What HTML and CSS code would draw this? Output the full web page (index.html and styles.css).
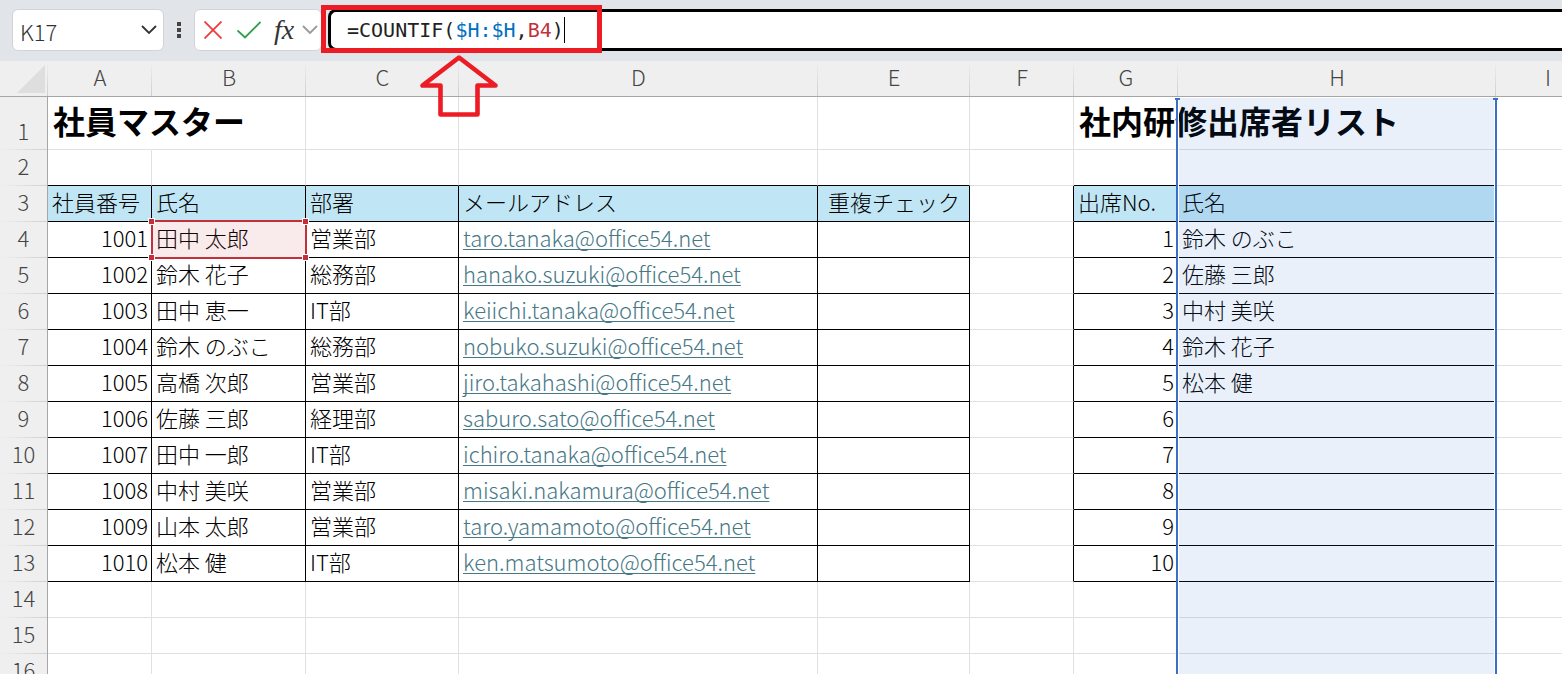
FILE: index.html
```html
<!DOCTYPE html>
<html lang="ja">
<head>
<meta charset="utf-8">
<title>社員マスター</title>
<link rel="stylesheet" href="styles.css">
</head>
<body>
<div class="toolbar">
  <div class="name-box">
    <input class="name-input" type="text" value="K17" aria-label="名前ボックス">
    <button class="tool" type="button" aria-label="名前の一覧">
      <svg width="16" height="10" viewBox="0 0 16 10"><path d="M1 1l7 7 7-7" fill="none" stroke="#333" stroke-width="1.8"/></svg>
    </button>
  </div>
  <svg class="grip" width="4" height="16" viewBox="0 0 4 16"><path d="M0 0h4v4H0zM0 6h4v4H0zM0 12h4v4H0z" fill="#444"/></svg>
  <div class="actions">
    <button class="tool" type="button" aria-label="キャンセル">
      <svg width="18" height="18" viewBox="0 0 18 18"><path d="M.5.5l17 17M17.500.5l-17 17" fill="none" stroke="#ee3a3a" stroke-width="1.8"/></svg>
    </button>
    <button class="tool" type="button" aria-label="入力">
      <svg width="24" height="18" viewBox="0 0 24 18"><path d="M.5 9.500l7.500 7L23.500 1" fill="none" stroke="#2f9e49" stroke-width="1.8"/></svg>
    </button>
    <button class="tool fx" type="button" aria-label="関数の挿入">fx</button>
    <button class="tool" type="button" aria-label="関数の一覧">
      <svg width="16" height="10" viewBox="0 0 16 10"><path d="M1 1l7 7 7-7" fill="none" stroke="#999" stroke-width="1.8"/></svg>
    </button>
  </div>
  <div class="formula">
    <div class="formula-text" role="textbox" aria-label="数式バー" contenteditable="true" spellcheck="false">=COUNTIF(<span class="ref-blue">$H:$H</span>,<span class="ref-red">B4</span>)<span class="caret"></span></div>
    <div class="callout"></div>
    <svg class="arrow" width="80" height="66" viewBox="0 0 80 66"><path d="M40 4.500L3.500 32.500H21.500V61.500H58.500V32.500H76.500Z" fill="none" stroke="#ed1c24" stroke-width="4.600" stroke-linejoin="round"/></svg>
  </div>
</div>

<main class="sheet">
  <table class="grid">
    <colgroup>
      <col class="w-head"><col class="w-s"><col class="w-b"><col class="w-c"><col class="w-d"><col class="w-e"><col class="w-s"><col class="w-s"><col class="w-h"><col class="w-s">
    </colgroup>
    <thead>
      <tr><th class="corner"><svg width="28" height="28" viewBox="0 0 28 28"><path d="M28 0v28H0z" fill="#dedede"/></svg></th><th>A</th><th>B</th><th>C</th><th>D</th><th>E</th><th>F</th><th>G</th><th>H<div class="column-range"></div></th><th>I</th></tr>
    </thead>
    <tbody>
      <tr class="title-row"><th>1</th><td class="title open">社員マスター</td><td></td><td></td><td></td><td></td><td></td><td class="title open">社内研修出席者リスト</td><td></td><td></td></tr>
      <tr class="above"><th>2</th><td></td><td></td><td></td><td></td><td></td><td></td><td></td><td></td><td></td></tr>
      <tr class="data label"><th>3</th><td>社員番号</td><td>氏名</td><td>部署</td><td>メールアドレス</td><td class="center">重複チェック</td><td></td><td>出席No.</td><td>氏名</td><td></td></tr>
      <tr class="data"><th>4</th><td>1001</td><td class="picked">田中 太郎<div class="cell-range"><i></i><i></i><i></i><i></i></div></td><td>営業部</td><td><a href="mailto:taro.tanaka@office54.net">taro.tanaka@office54.net</a></td><td></td><td></td><td>1</td><td>鈴木 のぶこ</td><td></td></tr>
      <tr class="data"><th>5</th><td>1002</td><td>鈴木 花子</td><td>総務部</td><td><a href="mailto:hanako.suzuki@office54.net">hanako.suzuki@office54.net</a></td><td></td><td></td><td>2</td><td>佐藤 三郎</td><td></td></tr>
      <tr class="data"><th>6</th><td>1003</td><td>田中 恵一</td><td>IT部</td><td><a href="mailto:keiichi.tanaka@office54.net">keiichi.tanaka@office54.net</a></td><td></td><td></td><td>3</td><td>中村 美咲</td><td></td></tr>
      <tr class="data"><th>7</th><td>1004</td><td>鈴木 のぶこ</td><td>総務部</td><td><a href="mailto:nobuko.suzuki@office54.net">nobuko.suzuki@office54.net</a></td><td></td><td></td><td>4</td><td>鈴木 花子</td><td></td></tr>
      <tr class="data"><th>8</th><td>1005</td><td>高橋 次郎</td><td>営業部</td><td><a href="mailto:jiro.takahashi@office54.net">jiro.takahashi@office54.net</a></td><td></td><td></td><td>5</td><td>松本 健</td><td></td></tr>
      <tr class="data"><th>9</th><td>1006</td><td>佐藤 三郎</td><td>経理部</td><td><a href="mailto:saburo.sato@office54.net">saburo.sato@office54.net</a></td><td></td><td></td><td>6</td><td></td><td></td></tr>
      <tr class="data"><th>10</th><td>1007</td><td>田中 一郎</td><td>IT部</td><td><a href="mailto:ichiro.tanaka@office54.net">ichiro.tanaka@office54.net</a></td><td></td><td></td><td>7</td><td></td><td></td></tr>
      <tr class="data"><th>11</th><td>1008</td><td>中村 美咲</td><td>営業部</td><td><a href="mailto:misaki.nakamura@office54.net">misaki.nakamura@office54.net</a></td><td></td><td></td><td>8</td><td></td><td></td></tr>
      <tr class="data"><th>12</th><td>1009</td><td>山本 太郎</td><td>営業部</td><td><a href="mailto:taro.yamamoto@office54.net">taro.yamamoto@office54.net</a></td><td></td><td></td><td>9</td><td></td><td></td></tr>
      <tr class="data"><th>13</th><td>1010</td><td>松本 健</td><td>IT部</td><td><a href="mailto:ken.matsumoto@office54.net">ken.matsumoto@office54.net</a></td><td></td><td></td><td>10</td><td></td><td></td></tr>
      <tr><th>14</th><td></td><td></td><td></td><td></td><td></td><td></td><td></td><td></td><td></td></tr>
      <tr><th>15</th><td></td><td></td><td></td><td></td><td></td><td></td><td></td><td></td><td></td></tr>
      <tr><th>16</th><td></td><td></td><td></td><td></td><td></td><td></td><td></td><td></td><td></td></tr>
    </tbody>
  </table>
</main>
</body>
</html>
```
FILE: styles.css
```css
* { box-sizing: border-box; }

body {
  margin: 0;
  height: 100vh;
  display: flex;
  flex-direction: column;
  overflow: hidden;
  background: #fff;
  color: #000;
  font-family: "Noto Sans CJK JP", "Noto Sans", sans-serif;
  font-size: 22px;
  font-weight: 300;
  line-height: 32px;
}

/* Toolbar */
.toolbar {
  position: relative;
  z-index: 2;
  display: flex;
  flex: none;
  align-items: center;
  padding: 9px 0 10px 12px;
  background: #e1e5ea;
}

.name-box,
.actions {
  display: flex;
  align-items: center;
  height: 42px;
  background: #fff;
  border: 1px solid #d0d3d7;
  border-radius: 6px;
}

.name-box { width: 152px; padding: 0 6px 0 7px; }

.name-input {
  flex: 1;
  min-width: 0;
  padding: 2px 0 0;
  border: 0;
  outline: 0;
  background: none;
  color: #333;
  font: inherit;
}

.tool {
  display: flex;
  padding: 0;
  border: 0;
  background: none;
}

.grip { margin: 0 13px; }

.actions { width: 128px; padding: 0 2px 0 9px; gap: 15px; }

.fx {
  margin: 0 -7px 0 -2px;
  color: #333;
  font: italic 28px/32px "Liberation Serif", serif;
}

.formula {
  position: relative;
  flex: 1;
  height: 42px;
  margin-left: 6px;
  border: 3px solid #000;
  border-right: 0;
  border-radius: 8px 0 0 8px;
  background: #fff;
}

.formula-text {
  display: flex;
  align-items: center;
  height: 36px;
  padding-left: 16px;
  outline: 0;
  color: #222;
  font: 20px/24px "DejaVu Sans Mono", monospace;
}

.ref-blue { color: #0070c0; }
.ref-red { color: #c0313a; }
.caret { width: 1px; height: 26px; background: #000; }

.callout {
  position: absolute;
  top: -7px;
  left: -10px;
  width: 281px;
  height: 48px;
  border: 5px solid #ed1c24;
}

.arrow {
  position: absolute;
  top: 41px;
  left: 88px;
}

/* Sheet */
.sheet { flex: 1; min-height: 0; overflow: hidden; }

.grid {
  width: 1599px;
  table-layout: fixed;
  border-collapse: separate;
  border-spacing: 0;
}

.w-head { width: 48px; }
.w-s { width: 104px; }
.w-b { width: 154px; }
.w-c { width: 153px; }
.w-d { width: 359px; }
.w-e { width: 152px; }
.w-h { width: 318px; }

tr { height: 36px; }

th, td {
  height: 36px;
  padding: 0 3px 6px 4px;
  border: 0 solid #e0e0e0;
  border-width: 0 1px 1px 0;
  font-weight: 300;
  line-height: 28px;
  white-space: nowrap;
}

th { padding: 0 0 6px; color: #444; text-align: center; }
td { text-align: left; }

thead th {
  position: relative;
  border-right: 0;
  border-bottom-color: #a6a6a6;
  background: linear-gradient(#efefef, #cfcfcf) right / 1px 100% no-repeat #efefef;
}

tbody th {
  border-right-color: #a6a6a6;
  border-bottom: 0;
  background: linear-gradient(90deg, #efefef, #cfcfcf) bottom / 100% 1px no-repeat #efefef;
}

.corner { padding: 0 3px 0 0; }
.corner svg { display: block; margin-left: auto; }

.title-row { height: 53px; }
.title-row th { vertical-align: bottom; }
.title { font-size: 32px; font-weight: 700; line-height: 44px; padding-left: 5px; }
.open { border-right-color: transparent; overflow: visible; }

/* Framed tables: columns A-E and G-H */
.data td { border-color: #000; }
.data td:nth-child(7) { border-bottom-color: #e0e0e0; }
.data td:nth-child(10) { border-color: #e0e0e0; }
.above td { border-bottom-color: #000; }
.above td:nth-child(7),
.above td:nth-child(10) { border-bottom-color: #e0e0e0; }

.data td:nth-child(2),
.data td:nth-child(8) { text-align: right; }
.label td:nth-child(2),
.label td:nth-child(8) { text-align: left; }
.label .center { text-align: center; }

.label td { background: #c0e6f5; }
.label td:nth-child(7),
.label td:nth-child(10) { background: none; }

a {
  color: #467886;
  text-decoration: underline;
  text-decoration-thickness: 1px;
  text-decoration-skip-ink: none;
  text-underline-offset: 2px;
}

/* Referenced ranges */
.column-range {
  position: absolute;
  z-index: 1;
  top: 37px;
  left: -2px;
  width: 321px;
  height: 100vh;
  border: 0 solid #3a6fc8;
  border-width: 0 2px;
  background: rgba(35, 105, 205, .1);
  box-shadow: inset 1px 0 #fff, inset -1px 0 #fff;
}

.column-range::before,
.column-range::after {
  content: "";
  position: absolute;
  top: 0;
  width: 5px;
  height: 2px;
  background: #3a6fc8;
}
.column-range::before { left: -3px; }
.column-range::after { right: -3px; }

.picked { position: relative; }

.cell-range {
  position: absolute;
  inset: -2px -2px -2px -1px;
  border: 2px solid #c0313a;
  background: rgba(192, 49, 58, .1);
}

.cell-range i {
  position: absolute;
  width: 7px;
  height: 7px;
  border: 1px solid #fff;
  background: #c0313a;
}
.cell-range i:nth-child(1) { top: -4px; left: -5px; }
.cell-range i:nth-child(2) { top: -4px; right: -4px; }
.cell-range i:nth-child(3) { bottom: -4px; left: -5px; }
.cell-range i:nth-child(4) { bottom: -4px; right: -4px; }
```
